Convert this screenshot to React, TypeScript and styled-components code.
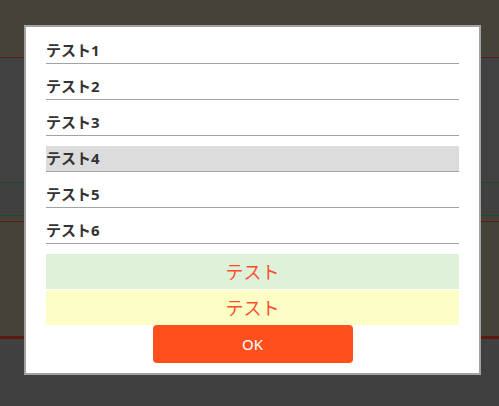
import React from "react";
import styled, { createGlobalStyle } from "styled-components";

const Global = createGlobalStyle`
  *, *::before, *::after { box-sizing: border-box; }
  html, body { margin: 0; padding: 0; }
  body {
    width: 499px;
    height: 406px;
    overflow: hidden;
    background: #404040;
    font-family: "Noto Sans CJK JP", "Noto Sans", sans-serif;
  }
`;

const Page = styled.div`
  position: relative;
  width: 499px;
  height: 406px;
  display: flex;
  flex-direction: column;
`;

const Band = styled.div<{ $h: number; $bg: string }>`
  height: ${(p) => p.$h}px;
  background: ${(p) => p.$bg};
  flex: none;
`;

const Modal = styled.div`
  position: absolute;
  left: 24px;
  top: 25px;
  width: 457px;
  border: 2px solid #a2a2a2;
  background: #fff;
  padding: 11px 20px 10px;
  display: flex;
  flex-direction: column;
`;

const Row = styled.div<{ $active?: boolean }>`
  height: 26px;
  line-height: 24px;
  border-bottom: 1px solid #a3a3a3;
  background: ${(p) => (p.$active ? "#dcdcdc" : "transparent")};
  font-family: "Noto Sans", "Noto Sans CJK JP", sans-serif;
  font-size: 15px;
  font-weight: 700;
  color: #333;
  margin-bottom: 10px;
  &:last-of-type { margin-bottom: 0; }
`;

const List = styled.div`
  display: flex;
  flex-direction: column;
`;

const Notice = styled.div<{ $bg: string }>`
  height: 35px;
  line-height: 35px;
  text-align: center;
  background: ${(p) => p.$bg};
  color: #ff4b2b;
  font-size: 18px;
`;

const Notices = styled.div`
  margin-top: 10px;
  display: flex;
  flex-direction: column;
  gap: 1px;
`;

const OkButton = styled.button`
  align-self: center;
  width: 200px;
  height: 38px;
  border: none;
  border-radius: 4px;
  background: #ff4f1d;
  color: #fff;
  font-family: "Noto Sans", "Noto Sans CJK JP", sans-serif;
  font-size: 15px;
  font-weight: 400;
  padding: 0;
  cursor: pointer;
`;

export default function App() {
  const items = ["テスト1", "テスト2", "テスト3", "テスト4", "テスト5", "テスト6"];
  return (
    <>
      <Global />
      <Page>
        <Band $h={57} $bg="#45423a" />
        <Band $h={1} $bg="#5c1d1a" />
        <Band $h={124} $bg="#414141" />
        <Band $h={1} $bg="#1d4a2c" />
        <Band $h={32} $bg="#404040" />
        <Band $h={1} $bg="#1d4a2c" />
        <Band $h={5} $bg="#45423a" />
        <Band $h={1} $bg="#5c1d1a" />
        <Band $h={114} $bg="#45423a" />
        <Band $h={3} $bg="#5a1a0e" />
        <Band $h={67} $bg="#404040" />
        <Modal>
          <List>
            {items.map((t, i) => (
              <Row key={t} $active={i === 3}>
                {t}
              </Row>
            ))}
          </List>
          <Notices>
            <Notice $bg="#def1d9">テスト</Notice>
            <Notice $bg="#fdfdc6">テスト</Notice>
          </Notices>
          <OkButton>OK</OkButton>
        </Modal>
      </Page>
    </>
  );
}
